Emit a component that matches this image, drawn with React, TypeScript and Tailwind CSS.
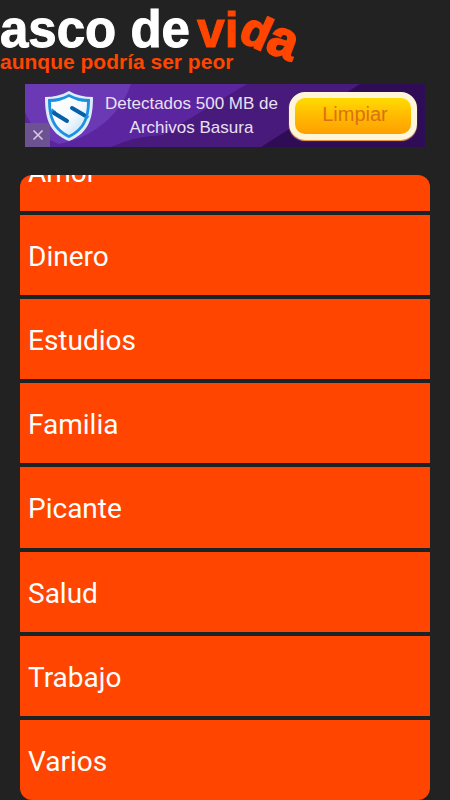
const categories = ["Dinero", "Estudios", "Familia", "Picante", "Salud", "Trabajo", "Varios"];

function Logo() {
  return (
    <h1>
      <svg width="310" height="76" viewBox="0 0 310 76" className="block font-['Liberation_Sans',Arial,sans-serif] font-bold">
        <text x="0" y="47" fontSize="51" fill="#ffffff" stroke="#ffffff" strokeWidth="1">asco de</text>
        <g fill="#ff4500" stroke="#ff4500" strokeWidth="1">
          <text x="197" y="47" fontSize="50">vi</text>
          <text transform="translate(237 40) rotate(24)" fontSize="46" strokeWidth="2">d</text>
          <text transform="translate(264 51) rotate(21)" fontSize="52" strokeWidth="2">a</text>
        </g>
        <text x="0" y="69" fontSize="21" fill="#ff4500">aunque podría ser peor</text>
      </svg>
    </h1>
  );
}

function Shield() {
  return (
    <svg width="50" height="52" viewBox="0 0 50 52" className="block shrink-0" aria-hidden="true">
      <defs>
        <linearGradient id="shield" x1="0" y1="0" x2="1" y2="1">
          <stop offset="0" stopColor="#ffffff" />
          <stop offset="0.55" stopColor="#f4faff" />
          <stop offset="1" stopColor="#b7dbf2" />
        </linearGradient>
      </defs>
      <path d="M25 1C18 5 10 7 1 7C1 26 4 43 25 51C46 43 49 26 49 7C40 7 32 5 25 1Z" fill="#dcecf8" />
      <path d="M25 4C18 8 11 9 4 9C4 27 8 40 25 48C42 40 46 27 46 9C39 9 32 8 25 4Z" fill="#1e90e0" />
      <path d="M25 7C19 10 13 12 7 12C7 27 11 38 25 45C39 38 43 27 43 12C37 12 31 10 25 7Z" fill="url(#shield)" />
      <path d="M7 20L11 23M40 25L44 28" stroke="#1e90e0" strokeWidth="4" />
      <path d="M10 23L23 31M28 18L40 25" stroke="#075fa8" strokeWidth="4" strokeLinecap="round" />
    </svg>
  );
}

function Banner() {
  return (
    <aside className="relative mx-auto mt-2 flex h-[63px] w-[400px] max-w-full items-center overflow-hidden bg-[#481a7c] pr-2 font-['Liberation_Sans',Arial,sans-serif]">
      <svg viewBox="0 0 400 63" preserveAspectRatio="none" className="absolute inset-0 h-full w-full" aria-hidden="true">
        <path d="M0 0H222L118 63H0Z" fill="#5b25a0" />
        <path d="M0 0H106Q95 32 63 50Q38 63 0 63Z" fill="#6c39b5" />
        <path d="M0 28Q10 53 42 63H0Z" fill="#5b25a0" />
        <path d="M86 63Q110 52 138 51L118 63Z" fill="#481a7c" />
        <path d="M335 0H400V63H236Z" fill="#2f0c56" />
      </svg>
      <div className="relative ml-[19px]">
        <Shield />
      </div>
      <p className="relative flex-1 text-center text-[17px] leading-6 text-[#e9e0f3]">
        Detectados 500 MB de
        <br />
        Archivos Basura
      </p>
      <button className="relative h-12 w-32 rounded-2xl border-[6px] border-[#fff5d9] bg-linear-to-b from-[#ffdc00] via-[#ffb900] to-[#ffa000] pb-1 pl-1 text-xl leading-none text-[#d97212] shadow-[0_1px_1px_#f5a54a]">
        Limpiar
      </button>
      <button aria-label="Cerrar" className="absolute bottom-0 left-0 flex h-6 w-[25px] items-center justify-center rounded-tr bg-[#6d5292]">
        <svg width="12" height="12" viewBox="0 0 12 12" stroke="#d7cae5" strokeWidth="1.6" aria-hidden="true">
          <path d="M1.5 1.5L10.5 10.5M10.5 1.5L1.5 10.5" />
        </svg>
      </button>
    </aside>
  );
}

export default function App() {
  return (
    <div className="flex min-h-screen flex-col bg-[#222222]">
      <header>
        <Logo />
      </header>
      <Banner />
      <nav className="mx-5 mt-7 flex flex-1 flex-col overflow-hidden rounded-xl font-[Roboto,sans-serif] text-[28px] text-white">
        <ul className="flex flex-1 flex-col gap-1 bg-[#1a2325]">
          <li className="flex h-9 items-end overflow-hidden bg-[#ff4500]">
            <a href="#amor" className="flex h-20 w-full shrink-0 items-center px-2 pt-1">Amor</a>
          </li>
          {categories.map((name) => (
            <li key={name} className="flex min-h-20 flex-1 bg-[#ff4500]">
              <a href={"#" + name.toLowerCase()} className="flex w-full items-center px-2 pt-1">{name}</a>
            </li>
          ))}
        </ul>
      </nav>
    </div>
  );
}
